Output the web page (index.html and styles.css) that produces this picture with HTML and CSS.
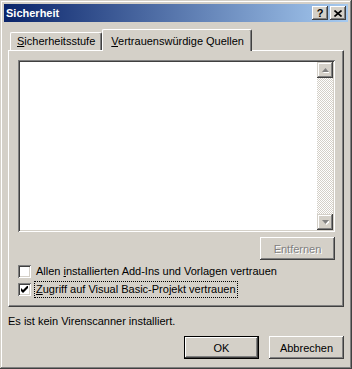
FILE: index.html
```html
<!DOCTYPE html>
<html lang="de">

<head>
     <meta charset="UTF-8">
     <title>Sicherheit</title>
     <link rel="stylesheet" href="styles.css">
</head>

<body>
     <div class="window">
          <div class="titlebar">
               <span class="title">Sicherheit</span>
               <div class="caption">
                    <span class="cap help">?</span>
                    <span class="cap close">
                         <svg width="8" height="7" viewBox="0 0 8 7">
                              <path d="M0.5 0.5 L7.5 6.5 M7.5 0.5 L0.5 6.5" stroke="#000" stroke-width="1.6" />
                         </svg>
                    </span>
               </div>
          </div>

          <div class="content">
               <div class="tabs">
                    <div class="tab"><u>S</u>icherheitsstufe</div>
                    <div class="tab active"><u>V</u>ertrauenswürdige Quellen</div>
               </div>

               <div class="panel">
                    <div class="listbox">
                         <div class="list"></div>
                         <div class="scrollbar">
                              <div class="sb-btn">
                                   <svg width="7" height="5" viewBox="0 0 7 5">
                                        <path d="M4.5 1 L8 5 L1 5 Z" fill="#fff" />
                                        <path d="M3.5 0 L7 4 L0 4 Z" fill="#808080" />
                                   </svg>
                              </div>
                              <div class="sb-track"></div>
                              <div class="sb-btn">
                                   <svg width="7" height="5" viewBox="0 0 7 5">
                                        <path d="M1 1 L8 1 L4.5 5 Z" fill="#fff" />
                                        <path d="M0 0 L7 0 L3.5 4 Z" fill="#808080" />
                                   </svg>
                              </div>
                         </div>
                    </div>

                    <div class="row-right">
                         <button class="btn" disabled>Entfernen</button>
                    </div>

                    <div class="check">
                         <span class="box"></span>
                         <span class="label">Allen <u>i</u>nstallierten Add-Ins und Vorlagen vertrauen</span>
                    </div>
                    <div class="check">
                         <span class="box">
                              <svg width="7" height="7" viewBox="0 0 7 7">
                                   <path d="M0 2 L2 4 L7 -1 L7 2 L2 7 L0 5 Z" fill="#000" />
                              </svg>
                         </span>
                         <span class="label focus"><u>Z</u>ugriff auf Visual Basic-Projekt vertrauen</span>
                    </div>
               </div>

               <p class="status">Es ist kein Virenscanner installiert.</p>

               <div class="actions">
                    <button class="btn default">OK</button>
                    <button class="btn">Abbrechen</button>
               </div>
          </div>
     </div>
</body>

</html>
```

FILE: styles.css
```css
* {
     margin: 0;
     padding: 0;
     box-sizing: border-box;
}

body {
     font: 11px/13px "Liberation Sans", Arial, sans-serif;
     color: #000;
     background: #d4d0c8;
}

.window {
     width: 352px;
     height: 369px;
     padding: 4px;
     background: #d4d0c8;
     display: flex;
     flex-direction: column;
     box-shadow: inset -1px -1px #404040, inset 1px 1px #d4d0c8,
          inset -2px -2px #808080, inset 2px 2px #fff;
}

.titlebar {
     height: 18px;
     padding: 0 2px 0 2px;
     display: flex;
     align-items: center;
     justify-content: space-between;
     background: linear-gradient(to right, #0a246a, #a6caf0);
}

.title {
     color: #fff;
     font-weight: bold;
}

.caption {
     display: flex;
     gap: 2px;
}

.cap {
     width: 16px;
     height: 14px;
     display: flex;
     align-items: center;
     justify-content: center;
     background: #d4d0c8;
     font-weight: bold;
     font-size: 11px;
     box-shadow: inset -1px -1px #404040, inset 1px 1px #fff,
          inset -2px -2px #808080;
}

.content {
     flex: 1;
     padding: 7px 4px 0 4px;
}

.tabs {
     height: 21px;
     padding-left: 2px;
     display: flex;
     align-items: flex-end;
     position: relative;
     z-index: 1;
}

.tab {
     height: 18px;
     padding: 2px 6px 0 6px;
     background: #d4d0c8;
     border-top: 1px solid #fff;
     border-left: 1px solid #fff;
     border-right: 1px solid #404040;
     border-radius: 2px 2px 0 0;
     box-shadow: inset -1px 0 #808080;
     white-space: nowrap;
}

.tab.active {
     height: 22px;
     margin-bottom: -1px;
     padding: 5px 7px 0 8px;
}

.panel {
     height: 257px;
     padding: 9px 8px 0 9px;
     border: 1px solid;
     border-color: #fff #404040 #404040 #fff;
     box-shadow: inset -1px -1px #808080;
}

.listbox {
     height: 172px;
     padding: 2px;
     display: flex;
     background: #fff;
     box-shadow: inset 1px 1px #808080, inset -1px -1px #fff,
          inset 2px 2px #404040, inset -2px -2px #d4d0c8;
}

.list {
     flex: 1;
}

.scrollbar {
     width: 16px;
     display: flex;
     flex-direction: column;
}

.sb-btn {
     height: 16px;
     display: flex;
     align-items: center;
     justify-content: center;
     background: #d4d0c8;
     box-shadow: inset -1px -1px #404040, inset 1px 1px #d4d0c8,
          inset -2px -2px #808080, inset 2px 2px #fff;
}

.sb-track {
     flex: 1;
     background: repeating-conic-gradient(#d4d0c8 0 25%, #fff 0 50%) 0 0 / 2px 2px;
}

.row-right {
     margin-top: 5px;
     display: flex;
     justify-content: flex-end;
}

.btn {
     width: 75px;
     height: 23px;
     border: none;
     background: #d4d0c8;
     font: 11px "Liberation Sans", Arial, sans-serif;
     color: #000;
     box-shadow: inset -1px -1px #404040, inset 1px 1px #fff,
          inset -2px -2px #808080, inset 2px 2px #d4d0c8;
}

.btn:disabled {
     color: #808080;
     text-shadow: 1px 1px #fff;
}

.btn.default {
     box-shadow: inset 0 0 0 1px #000, inset -2px -2px #404040,
          inset 2px 2px #fff, inset -3px -3px #808080;
}

.check {
     margin-top: 5px;
     height: 13px;
     display: flex;
     align-items: center;
}

.box {
     width: 13px;
     height: 13px;
     margin-right: 4px;
     display: flex;
     align-items: center;
     justify-content: center;
     background: #fff;
     box-shadow: inset 1px 1px #808080, inset -1px -1px #fff,
          inset 2px 2px #404040, inset -2px -2px #d4d0c8;
}

.label {
     padding: 1px 1px;
     white-space: nowrap;
}

.label.focus {
     outline: 1px dotted #000;
     outline-offset: 0;
}

.status {
     margin-top: 8px;
}

.actions {
     margin-top: 8px;
     display: flex;
     justify-content: flex-end;
     gap: 10px;
}
```
